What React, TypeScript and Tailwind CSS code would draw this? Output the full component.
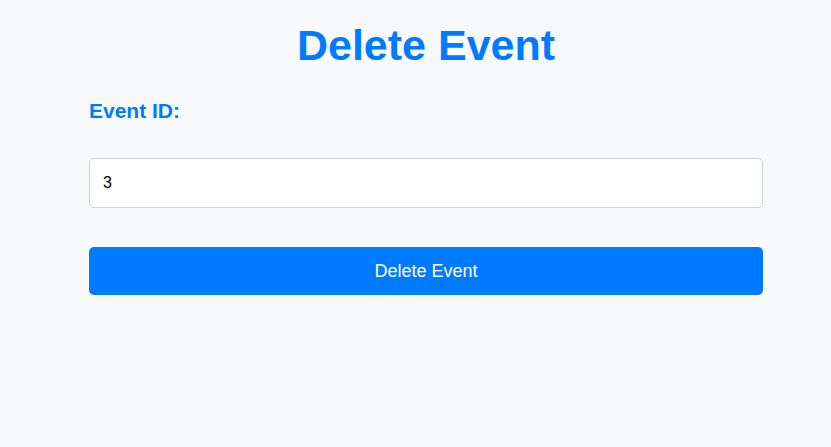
import React from "react";

export default function App() {
  return (
    <div className="min-h-[447px] w-full bg-[#f8f9fa]" style={{ fontFamily: '"Liberation Sans", Arial, sans-serif' }}>
      <div className="ml-[89px] flex w-[674px] flex-col pt-[24px]">
        <h1 className="text-center text-[43px] font-bold leading-none text-[#007bff]">Delete Event</h1>
        <label className="mt-[33px] text-[21px] font-bold leading-none text-[#007bff]">Event ID:</label>
        <input
          type="text"
          defaultValue="3"
          className="mt-[37px] h-[50px] w-full rounded-[5px] border border-[#ced4da] bg-white px-[13px] text-[16px] text-black outline-none"
        />
        <button className="mt-[39px] h-[48px] w-full rounded-[5px] bg-[#007bff] text-[18px] text-white">
          Delete Event
        </button>
      </div>
    </div>
  );
}
